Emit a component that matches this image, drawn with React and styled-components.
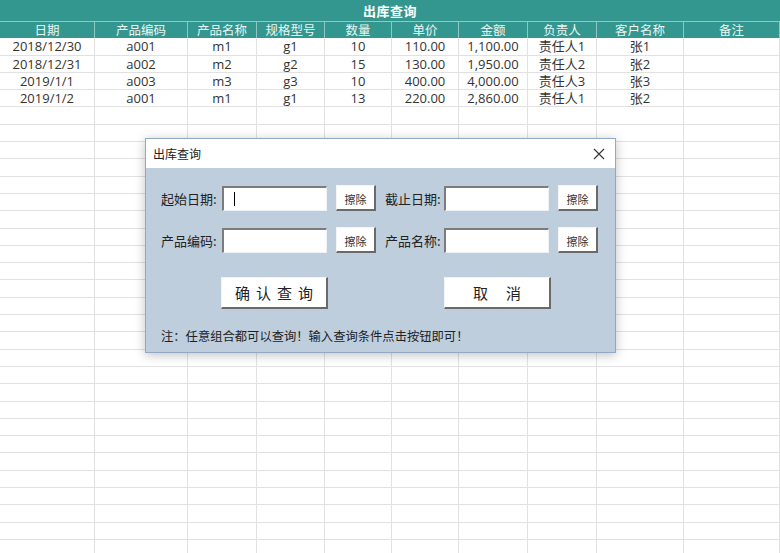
import React from 'react';
import styled, { createGlobalStyle } from 'styled-components';

const GlobalStyle = createGlobalStyle`
  html, body {
    margin: 0;
    padding: 0;
    background: #ffffff;
  }
  body {
    font-family: "Open Sans", "Noto Sans CJK SC", sans-serif;
  }
`;

const COLS = [95, 93, 69, 68, 67, 67, 69, 69, 87, 96];
const HEADERS = ['日期', '产品编码', '产品名称', '规格型号', '数量', '单价', '金额', '负责人', '客户名称', '备注'];
const ROWS = [
  ['2018/12/30', 'a001', 'm1', 'g1', '10', '110.00', '1,100.00', '责任人1', '张1', ''],
  ['2018/12/31', 'a002', 'm2', 'g2', '15', '130.00', '1,950.00', '责任人2', '张2', ''],
  ['2019/1/1', 'a003', 'm3', 'g3', '10', '400.00', '4,000.00', '责任人3', '张3', ''],
  ['2019/1/2', 'a001', 'm1', 'g1', '13', '220.00', '2,860.00', '责任人1', '张2', ''],
];
const TOTAL_ROWS = 30;

const Page = styled.div`
  position: relative;
  width: 780px;
  height: 553px;
  overflow: hidden;
  background: #fff;
`;

const Title = styled.div`
  height: 21px;
  background: #33978f;
  color: #fff;
  font-family: "Noto Sans CJK SC", sans-serif;
  font-weight: 700;
  font-size: 13px;
  line-height: 21px;
  text-align: center;
  letter-spacing: 0.5px;
`;

const Sheet = styled.div`
  display: grid;
  grid-template-columns: ${COLS.map((w) => `${w}px`).join(' ')};
  grid-auto-rows: 17.3px;
`;

const HeadCell = styled.div`
  background: #33978f;
  color: #e9f6f4;
  font-family: "Noto Sans CJK SC", sans-serif;
  font-size: 12.5px;
  line-height: 16px;
  text-align: center;
  border-right: 1px solid #8dcac4;
  border-top: 1px solid #8dcac4;
  box-sizing: border-box;
  white-space: nowrap;
  overflow: hidden;
`;

const Cell = styled.div`
  color: #333;
  font-family: "Open Sans", "Noto Sans CJK SC", sans-serif;
  font-size: 13px;
  line-height: 16px;
  text-align: center;
  border-right: 1px solid #e1e1e1;
  border-bottom: 1px solid #e1e1e1;
  box-sizing: border-box;
  white-space: nowrap;
  overflow: hidden;
`;

const Dialog = styled.div`
  position: absolute;
  left: 145px;
  top: 138px;
  width: 471px;
  height: 215px;
  box-sizing: border-box;
  border: 1px solid #8fa9c7;
  background: #bfcedd;
  box-shadow: 0 2px 10px rgba(0, 0, 0, 0.25);
  display: flex;
  flex-direction: column;
  font-family: "Noto Sans CJK SC", sans-serif;
  color: #222;
`;

const DialogHead = styled.div`
  height: 29px;
  background: #fff;
  display: flex;
  align-items: center;
  justify-content: space-between;
  padding: 0 10px 0 7px;
  font-size: 12px;
`;

const Close = styled.div`
  width: 12px;
  height: 12px;
  display: flex;
`;

const DialogBody = styled.div`
  flex: 1;
  padding: 17px 0 0 15px;
  display: flex;
  flex-direction: column;
`;

const FieldRow = styled.div`
  display: flex;
  align-items: center;
  height: 26px;
  margin-bottom: ${(p) => p.$gap || 0}px;
`;

const Field = styled.div`
  display: flex;
  align-items: center;
  margin-right: 9px;
`;

const Label = styled.span`
  width: ${(p) => p.$w}px;
  font-size: 13px;
  color: #222;
  white-space: nowrap;
`;

const TextBox = styled.div`
  width: 105px;
  height: 25px;
  box-sizing: border-box;
  background: #fff;
  border-top: 2px solid #7c7c7c;
  border-left: 2px solid #7c7c7c;
  border-bottom: 1px solid #eef2f6;
  border-right: 1px solid #eef2f6;
  display: flex;
  align-items: center;
  margin-right: 9px;
`;

const Caret = styled.span`
  width: 1px;
  height: 14px;
  background: #000;
  margin-left: 10px;
`;

const ClearButton = styled.div`
  width: 40px;
  height: 26px;
  box-sizing: border-box;
  background: #fff;
  border-top: 1px solid #f4f4f4;
  border-left: 1px solid #f4f4f4;
  border-right: 2px solid #6a6a6a;
  border-bottom: 2px solid #6a6a6a;
  font-size: 11px;
  color: #333;
  display: flex;
  align-items: center;
  justify-content: center;
  padding-top: 3px;
`;

const ActionRow = styled.div`
  display: flex;
  margin-top: 24px;
  padding-left: 60px;
  gap: 116px;
`;

const ActionButton = styled.div`
  width: 107px;
  height: 32px;
  box-sizing: border-box;
  background: #fff;
  border-top: 1px solid #f4f4f4;
  border-left: 1px solid #f4f4f4;
  border-right: 2px solid #6a6a6a;
  border-bottom: 2px solid #6a6a6a;
  font-size: 15px;
  color: #222;
  letter-spacing: ${(p) => p.$spacing}px;
  display: flex;
  align-items: center;
  justify-content: center;
  padding-left: ${(p) => p.$spacing}px;
`;

const Note = styled.div`
  margin-top: 18px;
  font-size: 12.3px;
  color: #222;
`;

const App = () => {
  const cells = [];
  for (let r = 0; r < TOTAL_ROWS; r += 1) {
    const row = ROWS[r] || COLS.map(() => '');
    row.forEach((v, c) => cells.push(<Cell key={`${r}-${c}`}>{v}</Cell>));
  }

  return (
    <Page>
      <GlobalStyle />
      <Title>出库查询</Title>
      <Sheet>
        {HEADERS.map((h) => (
          <HeadCell key={h}>{h}</HeadCell>
        ))}
        {cells}
      </Sheet>

      <Dialog>
        <DialogHead>
          <span>出库查询</span>
          <Close>
            <svg width="12" height="12" viewBox="0 0 12 12">
              <path d="M1 1L11 11M11 1L1 11" stroke="#333" strokeWidth="1.1" fill="none" />
            </svg>
          </Close>
        </DialogHead>

        <DialogBody>
          <FieldRow $gap={16}>
            <Field>
              <Label $w={61}>起始日期:</Label>
              <TextBox><Caret /></TextBox>
              <ClearButton>擦除</ClearButton>
            </Field>
            <Field>
              <Label $w={59}>截止日期:</Label>
              <TextBox />
              <ClearButton>擦除</ClearButton>
            </Field>
          </FieldRow>
          <FieldRow>
            <Field>
              <Label $w={61}>产品编码:</Label>
              <TextBox />
              <ClearButton>擦除</ClearButton>
            </Field>
            <Field>
              <Label $w={59}>产品名称:</Label>
              <TextBox />
              <ClearButton>擦除</ClearButton>
            </Field>
          </FieldRow>

          <ActionRow>
            <ActionButton $spacing={6}>确认查询</ActionButton>
            <ActionButton $spacing={18}>取消</ActionButton>
          </ActionRow>

          <Note>注：任意组合都可以查询！输入查询条件点击按钮即可！</Note>
        </DialogBody>
      </Dialog>
    </Page>
  );
};

export default App;
